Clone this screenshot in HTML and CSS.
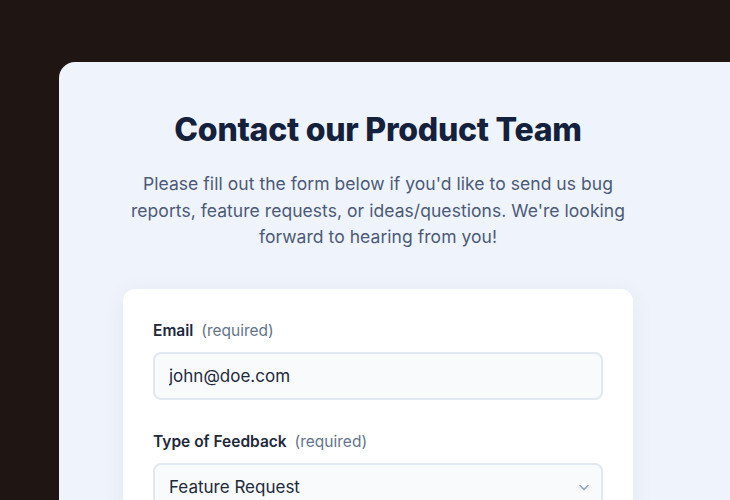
FILE: index.html
```html
<!DOCTYPE html>
<html lang="en">
<head>
    <meta charset="UTF-8">
    <meta name="viewport" content="width=device-width, initial-scale=1.0">
    <title>Contact our Product Team</title>
    <link rel="stylesheet" href="styles.css">
</head>
<body>
    <div class="panel">
        <div class="column">
            <h1>Contact our Product Team</h1>
            <p class="intro">Please fill out the form below if you'd like to send us bug reports, feature requests, or ideas/questions. We're looking forward to hearing from you!</p>
            <form class="card">
                <div class="field">
                    <label for="email">Email <span class="hint">(required)</span></label>
                    <input type="email" id="email" value="john@doe.com">
                </div>
                <div class="field">
                    <label for="type">Type of Feedback <span class="hint">(required)</span></label>
                    <div class="select-wrap">
                        <select id="type">
                            <option>Feature Request</option>
                            <option>Bug Report</option>
                            <option>Question</option>
                        </select>
                        <svg class="chevron" width="14" height="14" viewBox="0 0 14 14" fill="none">
                            <path d="M3 5.5l4 4 4-4" stroke="#94a3b8" stroke-width="1.6" stroke-linecap="round" stroke-linejoin="round"/>
                        </svg>
                    </div>
                </div>
            </form>
        </div>
    </div>
</body>
</html>
```

FILE: styles.css
```css
body {
    margin: 0;
    font-family: Inter, "Noto Sans", sans-serif;
    background: #1f1614;
    padding: 62px 0 0 59px;
    height: 500px;
    box-sizing: border-box;
    overflow: hidden;
}

.panel {
    background: #eff3fb;
    border-radius: 16px 0 0 0;
    padding: 48px 64px 60px;
    min-height: 600px;
}

.column {
    width: 510px;
}

h1 {
    margin: 0;
    font-size: 32px;
    font-weight: 800;
    letter-spacing: -0.25px;
    line-height: 40px;
    text-align: center;
    color: #14213d;
}

.intro {
    margin: 21px 0 0;
    font-size: 17.5px;
    letter-spacing: 0.05px;
    line-height: 26.5px;
    text-align: center;
    color: #4b5a78;
}

.card {
    margin-top: 38px;
    background: #fff;
    border-radius: 12px;
    padding: 31px 30px;
    box-shadow: 0 4px 24px rgba(30, 41, 80, 0.05);
}

.field + .field {
    margin-top: 31px;
}

label {
    display: block;
    font-size: 15.5px;
    font-weight: 600;
    color: #1e293b;
    line-height: 22px;
    margin-bottom: 10px;
}

.hint {
    font-weight: 400;
    color: #64748b;
    margin-left: 4px;
}

input, select {
    width: 100%;
    height: 48px;
    box-sizing: border-box;
    border: 2px solid #e2e8f0;
    border-radius: 8px;
    background: #f8fafc;
    padding: 0 14px;
    font-family: inherit;
    font-size: 17px;
    color: #1e293b;
    outline: none;
}

.select-wrap {
    position: relative;
}

select {
    appearance: none;
}

.chevron {
    position: absolute;
    right: 12px;
    top: 17px;
}
```
